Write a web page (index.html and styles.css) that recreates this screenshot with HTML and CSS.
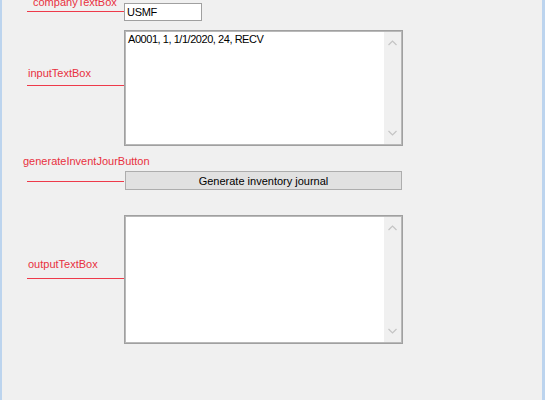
FILE: index.html
```html
<!DOCTYPE html>
<html>
<head>
    <title>Inventory journal</title>
    <link rel="stylesheet" href="styles.css">
</head>
<body>
    <div class="window">
        <div class="form">
            <div class="row row-company">
                <div class="tag"><span class="tag-name">companyTextBox</span></div>
                <div class="field">USMF</div>
            </div>
            <div class="row row-input">
                <div class="tag"><span class="tag-name">inputTextBox</span></div>
                <div class="memo">
                    <div class="memo-text">A0001, 1, 1/1/2020, 24, RECV</div>
                    <div class="scroll">
                        <svg width="9" height="6" viewBox="0 0 9 6"><path d="M0.5 5 L4.5 1 L8.5 5" fill="none" stroke="#c4c4c4" stroke-width="1.2"/></svg>
                        <svg width="9" height="6" viewBox="0 0 9 6"><path d="M0.5 1 L4.5 5 L8.5 1" fill="none" stroke="#c4c4c4" stroke-width="1.2"/></svg>
                    </div>
                </div>
            </div>
            <div class="row row-button">
                <div class="tag"><span class="tag-name">generateInventJourButton</span></div>
                <button class="btn">Generate inventory journal</button>
            </div>
            <div class="row row-output">
                <div class="tag"><span class="tag-name">outputTextBox</span></div>
                <div class="memo memo-output">
                    <div class="memo-text"></div>
                    <div class="scroll">
                        <svg width="9" height="6" viewBox="0 0 9 6"><path d="M0.5 5 L4.5 1 L8.5 5" fill="none" stroke="#c4c4c4" stroke-width="1.2"/></svg>
                        <svg width="9" height="6" viewBox="0 0 9 6"><path d="M0.5 1 L4.5 5 L8.5 1" fill="none" stroke="#c4c4c4" stroke-width="1.2"/></svg>
                    </div>
                </div>
            </div>
        </div>
    </div>
</body>
</html>
```

FILE: styles.css
```css
*{
    box-sizing: border-box;
}
body{
    margin:0;
    background-color: #F0F0F0;
    font-family: "Liberation Sans", Arial, sans-serif;
    font-size: 11px;
}
.window{
    height:400px;
    overflow:hidden;
    background-color: #F0F0F0;
    border-left:2px solid #BCD4EE;
    border-right:3px solid #BCD4EE;
}
.form{
    padding-left:25px;
}
.row{
    display:flex;
    align-items:flex-start;
}
.tag{
    width:97px;
    flex:none;
    border-bottom:1px solid #EE3A4A;
}
.tag-name{
    display:block;
    line-height:13px;
    color:#E8303F;
    white-space:nowrap;
}

/* company */
.row-company .tag{
    margin-top:-4px;
    padding-bottom:2px;
}
.row-company .tag-name{
    padding-left:6px;
}
.field{
    margin-top:3px;
    width:78px;
    height:18px;
    background:#fff;
    border:1px solid #A0A0A0;
    padding:2px 0 0 2px;
    line-height:13px;
    letter-spacing:-0.3px;
}

/* input */
.row-input{
    margin-top:9px;
}
.row-input .tag{
    margin-top:37px;
    padding-bottom:5px;
}
.row-input .tag-name{
    padding-left:1px;
}
.memo{
    width:279px;
    height:116px;
    background:#fff;
    border:1px solid #A0A0A0;
    box-shadow: inset 0 0 0 1px #B9B9B9;
    padding:1px;
    display:flex;
}
.memo-text{
    flex:1;
    padding:1px 0 0 2px;
    line-height:13px;
    letter-spacing:-0.45px;
    white-space:nowrap;
}
.scroll{
    width:17px;
    background:#F0F0F0;
    display:flex;
    flex-direction:column;
    justify-content:space-between;
    align-items:center;
    padding:8px 0 8px 0;
}
.scroll svg{
    display:block;
}

/* button */
.row-button{
    margin-top:25px;
}
.row-button .tag{
    margin-top:-16px;
    padding-bottom:13px;
}
.row-button .tag-name{
    margin-left:-4px;
}
.btn{
    margin:0 0 0 1px;
    width:277px;
    height:19px;
    padding:0;
    background:#E1E1E1;
    border:1px solid #ADADAD;
    font-family: "Liberation Sans", Arial, sans-serif;
    font-size:11px;
    color:#000;
}

/* output */
.row-output{
    margin-top:25px;
}
.row-output .tag{
    margin-top:43px;
    padding-bottom:7px;
}
.row-output .tag-name{
    padding-left:1px;
}
.memo-output{
    height:129px;
}
```
